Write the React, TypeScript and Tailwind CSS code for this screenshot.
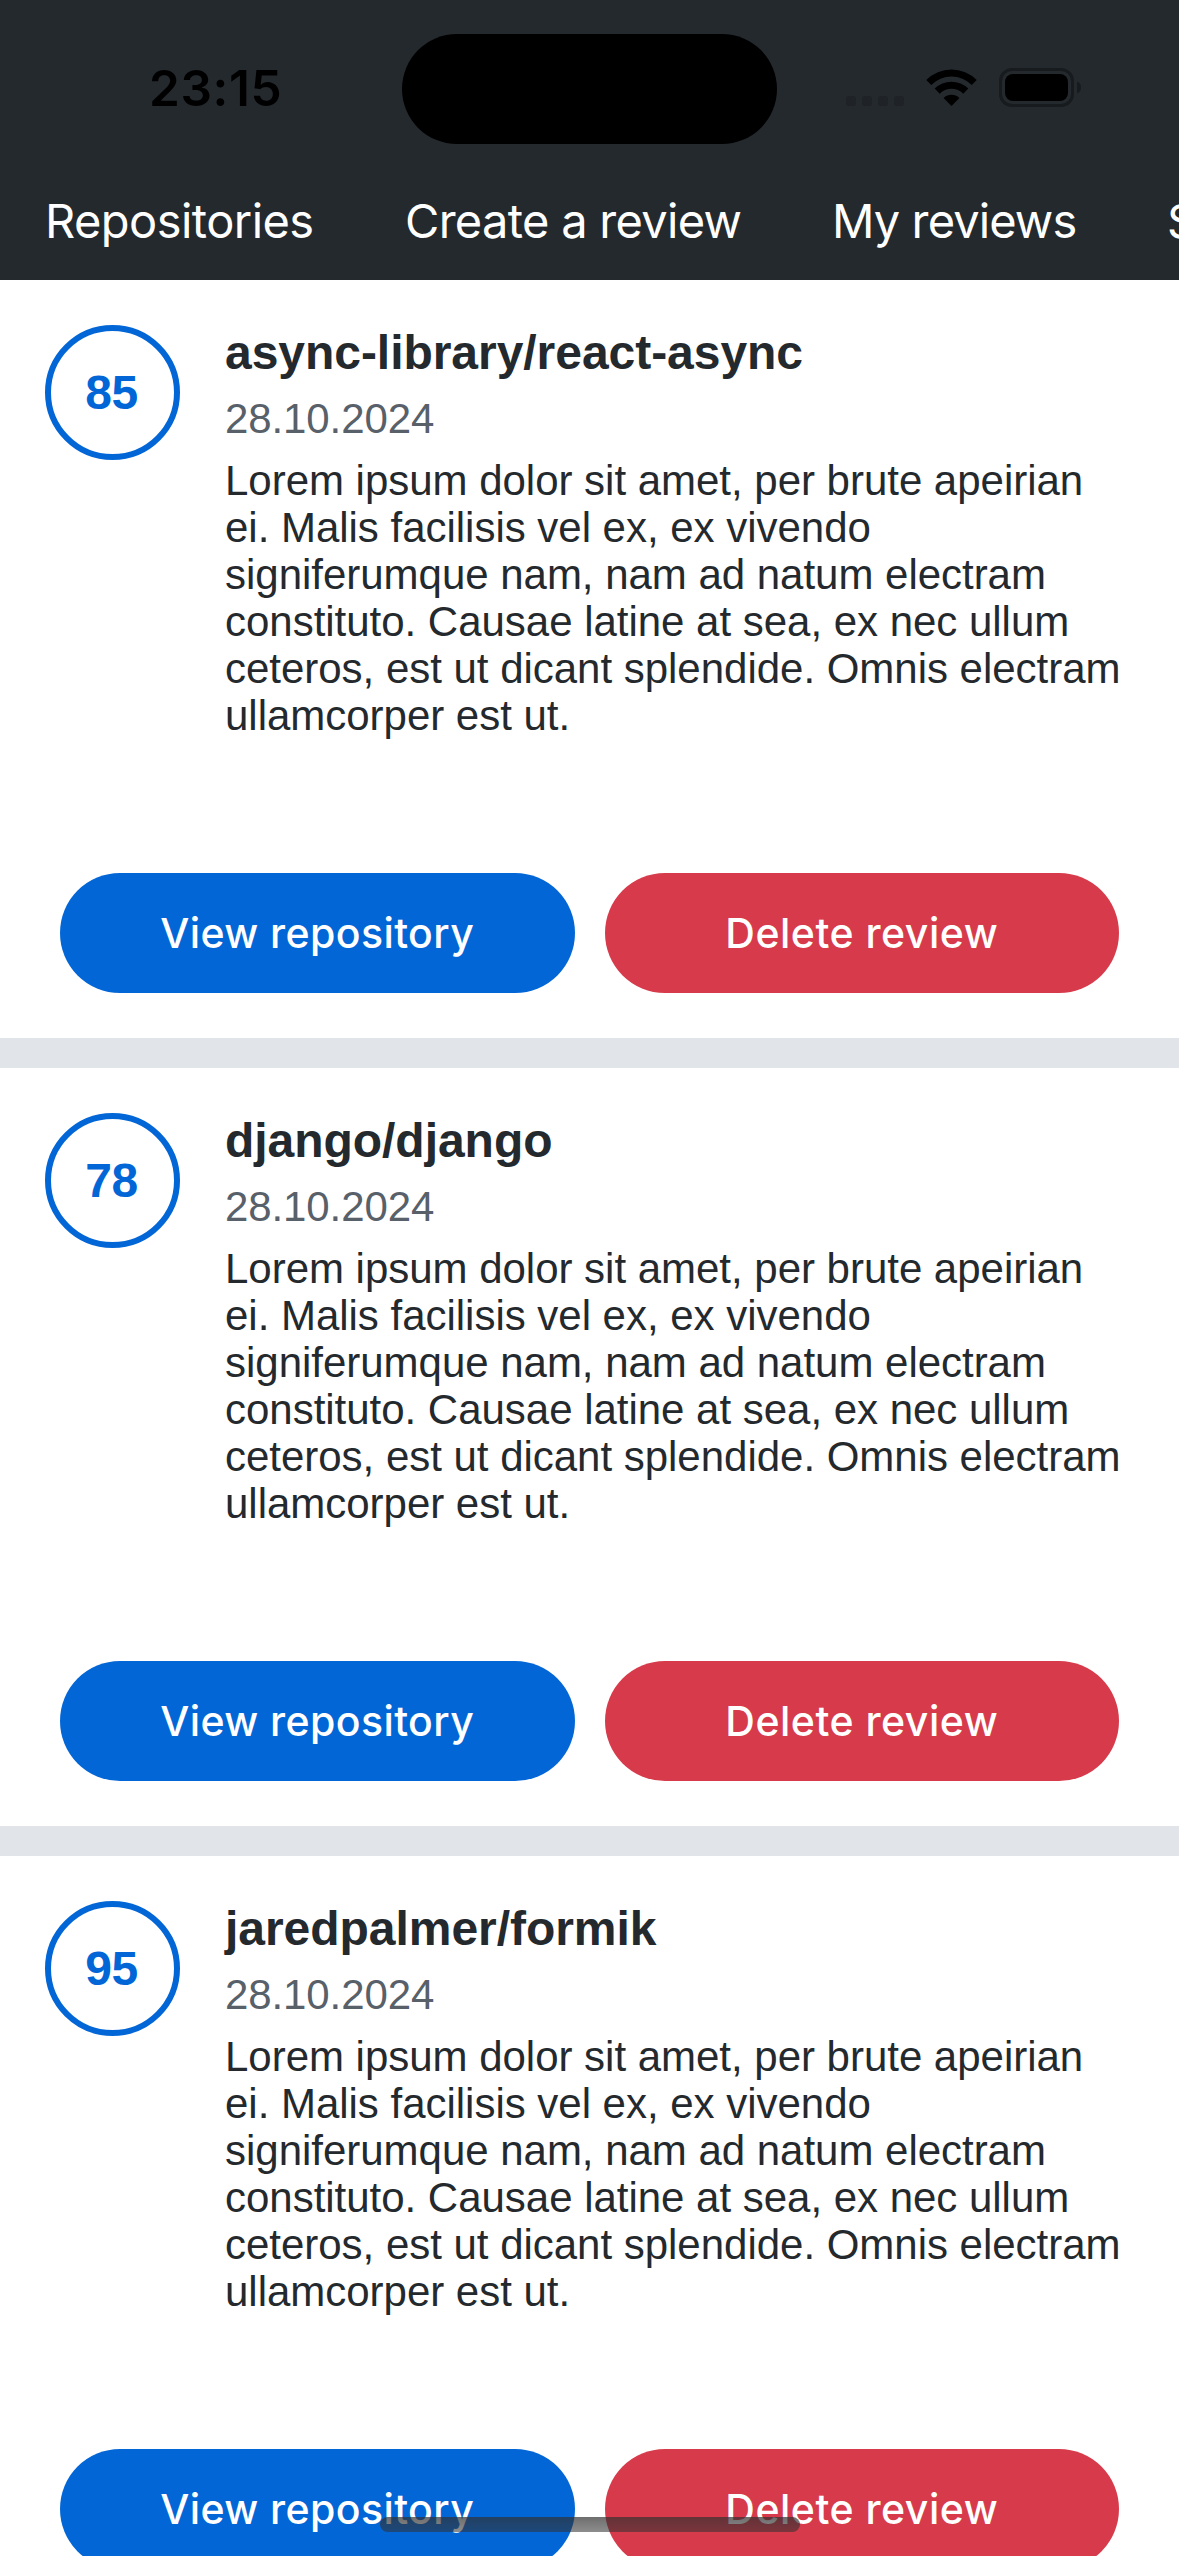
const LOREM =
  'Lorem ipsum dolor sit amet, per brute apeirian ei. Malis facilisis vel ex, ex vivendo signiferumque nam, nam ad natum electram constituto. Causae latine at sea, ex nec ullum ceteros, est ut dicant splendide. Omnis electram ullamcorper est ut.';

const reviews = [
  { rating: 85, name: 'async-library/react-async', date: '28.10.2024', text: LOREM },
  { rating: 78, name: 'django/django', date: '28.10.2024', text: LOREM },
  { rating: 95, name: 'jaredpalmer/formik', date: '28.10.2024', text: LOREM },
];

function SignalDots() {
  return (
    <div className="mb-[2px] flex gap-[6px]">
      {[0, 1, 2, 3].map((i) => (
        <div key={i} className="size-[10px] rounded-[3px] bg-[#1f2226]" />
      ))}
    </div>
  );
}

function Wifi() {
  return (
    <svg className="ml-[22px] mb-[2px]" width="51" height="37" viewBox="0 0 51 37">
      <path d="M0.3 11 A35.6 35.6 0 0 1 50.7 11 L45.8 16 A28.7 28.7 0 0 0 5.2 16 Z" />
      <path d="M8.7 19.6 A23.8 23.8 0 0 1 42.3 19.6 L37.3 24.7 A16.7 16.7 0 0 0 13.7 24.7 Z" />
      <path d="M17.6 28.9 A11.5 11.5 0 0 1 33.4 28.9 L25.5 37 Z" />
    </svg>
  );
}

function Battery() {
  return (
    <svg className="ml-[22px]" width="83" height="41" viewBox="0 0 83 41">
      <rect x="1.5" y="2.5" width="72" height="36" rx="11.5" fill="none" stroke="#171b1d" strokeWidth="3" />
      <rect x="6" y="7" width="63" height="27" rx="8" />
      <path d="M78 14.5 a6.5 6.5 0 0 1 0 12 Z" fill="#171b1d" />
    </svg>
  );
}

function Header() {
  return (
    <header className="h-[280px] shrink-0 overflow-hidden bg-[#24292e]">
      <div className="flex h-[177px] items-start pt-[34px]">
        <div className="w-[402px] pl-[149px] pt-[24px] font-['Inter'] text-[49.5px] leading-[60px] font-semibold tracking-[0.6px] text-black">
          23:15
        </div>
        <div className="h-[110px] w-[375px] rounded-full bg-black" />
        <div className="ml-[69px] flex h-[74px] items-end">
          <SignalDots />
          <Wifi />
          <Battery />
        </div>
      </div>
      <nav className="flex gap-[90px] pl-[45px] font-['Inter'] text-[47px] leading-[88px] tracking-[-0.7px] whitespace-nowrap text-white">
        <span className="w-[270px] shrink-0 tracking-[-0.55px]">Repositories</span>
        <span className="w-[337px] shrink-0">Create a review</span>
        <span className="w-[245px] shrink-0 tracking-[-0.9px]">My reviews</span>
        <span className="shrink-0">Sign out</span>
      </nav>
    </header>
  );
}

function Review({ rating, name, date, text }: (typeof reviews)[number]) {
  return (
    <article className="h-[758px] shrink-0 bg-white px-[45px] pt-[45px]">
      <div className="flex h-[548px] gap-[45px]">
        <div className="flex size-[135px] shrink-0 items-center justify-center rounded-full border-[6px] border-[#0366d6] pr-[2px] text-[48px] font-bold tracking-[-0.4px] text-[#0366d6]">
          {rating}
        </div>
        <div className="w-[912px]">
          <h2 className="text-[48px] leading-[56px] font-bold tracking-[-0.04px]">{name}</h2>
          <p className="mt-[14px] text-[42px] leading-[48px] tracking-[-0.1px] text-[#586069]">{date}</p>
          <p className="mt-[15px] text-[42px] leading-[46.9px] tracking-[-0.02px]">{text}</p>
        </div>
      </div>
      <div className="flex gap-[30px] px-[15px] font-['Inter'] text-[41px] font-medium text-white">
        <button className="h-[120px] flex-1 rounded-full bg-[#0366d6] pt-[2px] tracking-[0.4px]">
          View repository
        </button>
        <button className="h-[120px] flex-1 rounded-full bg-[#d73a4a] pt-[2px] tracking-[0.5px]">
          Delete review
        </button>
      </div>
    </article>
  );
}

export default function App() {
  return (
    <div className="relative flex h-[2556px] w-[1179px] flex-col overflow-hidden bg-[#e1e4e8] font-['Liberation_Sans',Arial,sans-serif] text-[#24292e]">
      <Header />
      <main className="flex flex-col gap-[30px]">
        {reviews.map((r) => (
          <Review key={r.name} {...r} />
        ))}
      </main>
      <div className="absolute bottom-[24px] left-[380px] h-[15px] w-[420px] rounded-full bg-linear-to-b from-[#303030]/70 to-[#303030]/55" />
    </div>
  );
}
